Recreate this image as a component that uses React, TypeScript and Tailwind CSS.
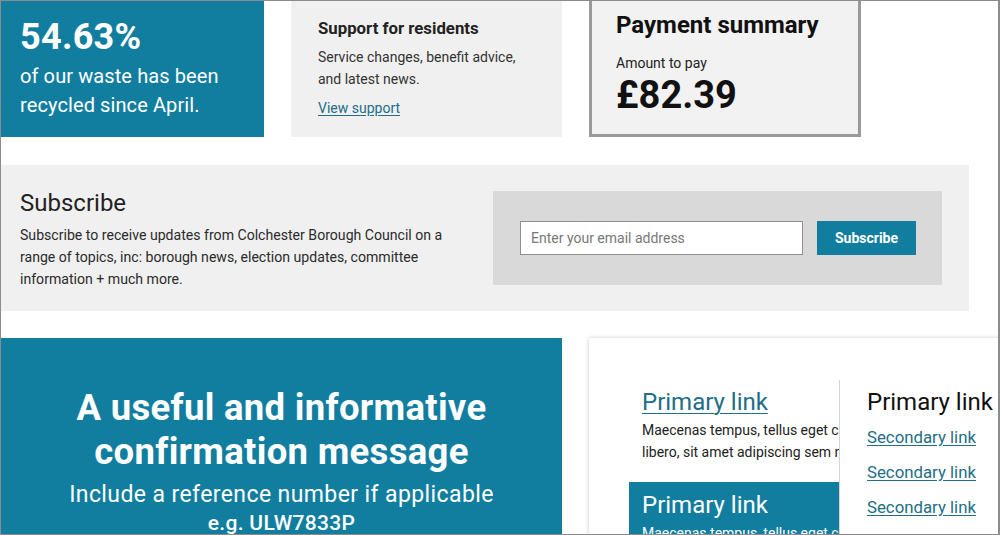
const teal = 'bg-[#127e9f]';

function StatCard() {
  return (
    <div className={`${teal} w-[263px] shrink-0 pl-[19px] pt-[16px] text-white`}>
      <p className="text-[36px] leading-[41px] font-bold tracking-[0.3px]">54.63%</p>
      <p className="mt-[4px] text-[20px] leading-[29px] tracking-[0.1px]">
        of our waste has been
        <br />
        recycled since April.
      </p>
    </div>
  );
}

function SupportCard() {
  return (
    <div className="w-[271px] shrink-0 bg-[#f0f0f0] pl-[27px] pt-[15px] text-[#222]">
      <h3 className="text-[16.8px] leading-[24px] font-bold">Support for residents</h3>
      <p className="mt-[6px] text-[14px] leading-[22px] text-[#333]">
        Service changes, benefit advice,
        <br />
        and latest news.
      </p>
      <a href="#" className="mt-[7px] block text-[14px] leading-[22px] text-[#216e86] underline underline-offset-2">
        View support
      </a>
    </div>
  );
}

function PaymentCard() {
  return (
    <div className="w-[272px] shrink-0 border-[3px] border-t-0 border-[#9a9a9a] bg-[#f2f2f2] pl-[24px] pt-[9px] text-[#111]">
      <h3 className="text-[24px] leading-[30px] font-bold">Payment summary</h3>
      <p className="mt-[13px] text-[14px] leading-[20px] text-[#222]">Amount to pay</p>
      <p className="text-[38px] leading-[44px] font-bold">£82.39</p>
    </div>
  );
}

function Subscribe() {
  return (
    <section className="flex h-[146px] w-[968px] items-start justify-between bg-[#f0f0f0] pl-[19px] pr-[27px]">
      <div className="w-[440px] pt-[23px] text-[#222]">
        <h2 className="text-[24px] leading-[30px]">Subscribe</h2>
        <p className="mt-[6px] text-[14.1px] leading-[22px] text-[#2b2b2b]">
          Subscribe to receive updates from Colchester Borough Council on a range of topics, inc: borough news,
          election updates, committee information + much more.
        </p>
      </div>
      <div className="mt-[26px] flex h-[94px] w-[449px] items-center gap-[14px] bg-[#d9d9d9] pl-[27px]">
        <input
          type="email"
          placeholder="Enter your email address"
          className="h-[34px] w-[283px] border border-[#8f8f8f] bg-white px-[10px] text-[14px] text-[#333] outline-none placeholder:text-[#777]"
        />
        <button className={`${teal} h-[34px] w-[99px] text-[14px] font-bold text-white`}>Subscribe</button>
      </div>
    </section>
  );
}

function Confirmation() {
  return (
    <div className={`${teal} w-[561px] shrink-0 pt-[48px] text-center text-white`}>
      <h2 className="text-[36.5px] leading-[44px] font-bold tracking-[0.3px]">
        A useful and informative
        <br />
        confirmation message
      </h2>
      <p className="mt-[6px] text-[23px] leading-[29px] tracking-[0.4px]">Include a reference number if applicable</p>
      <p className="text-[21px] leading-[29px] font-medium tracking-[0.3px]">e.g. ULW7833P</p>
    </div>
  );
}

function LinksPanel() {
  const lorem = (
    <>
      <span className="block whitespace-nowrap">Maecenas tempus, tellus eget condimentum rhoncus, sem quam semper</span>
      <span className="block whitespace-nowrap">libero, sit amet adipiscing sem neque sed ipsum.</span>
    </>
  );

  return (
    <div className="flex w-[440px] shrink-0 bg-white pl-[40px] pt-[42px] shadow-[0_0_4px_rgba(0,0,0,0.22)]">
      {/* Left column, content clipped by the divider */}
      <div className="w-[210px] shrink-0 overflow-hidden">
        <div className="px-[13px] pt-[7px] pb-[19px]">
          <a href="#" className="block text-[24px] leading-[30px] text-[#216e86] underline decoration-1 underline-offset-[3px]">
            Primary link
          </a>
          <p className="mt-[2px] text-[14px] leading-[22px] text-[#222]">{lorem}</p>
        </div>
        <div className={`${teal} px-[13px] pt-[8px] pb-[10px] text-white`}>
          <a href="#" className="block text-[24px] leading-[30px]">Primary link</a>
          <p className="mt-[2px] text-[14px] leading-[22px]">{lorem}</p>
        </div>
      </div>

      {/* Right column */}
      <div className="flex-1 border-l border-[#d4d4d4] pl-[27px] pt-[7px]">
        <p className="text-[24px] leading-[30px] whitespace-nowrap text-[#111]">Primary link</p>
        <ul className="mt-[8px] flex flex-col gap-[10px]">
          {['Secondary link', 'Secondary link', 'Secondary link'].map((label, i) => (
            <li key={i} className="leading-[24px]">
              <a href="#" className="text-[16.8px] leading-[24px] whitespace-nowrap text-[#216e86] underline underline-offset-2">
                {label}
              </a>
            </li>
          ))}
        </ul>
      </div>
    </div>
  );
}

export default function App() {
  return (
    <div
      className="h-[535px] w-[1000px] overflow-hidden border border-r-2 border-[#8c8c8c] bg-white"
      style={{ fontFamily: 'Roboto, "Noto Sans", sans-serif' }}
    >
      <div className="flex h-[136px] gap-[27px]">
        <StatCard />
        <SupportCard />
        <PaymentCard />
      </div>

      <div className="mt-[28px]">
        <Subscribe />
      </div>

      <div className="mt-[27px] flex h-[300px] gap-[27px]">
        <Confirmation />
        <LinksPanel />
      </div>
    </div>
  );
}
